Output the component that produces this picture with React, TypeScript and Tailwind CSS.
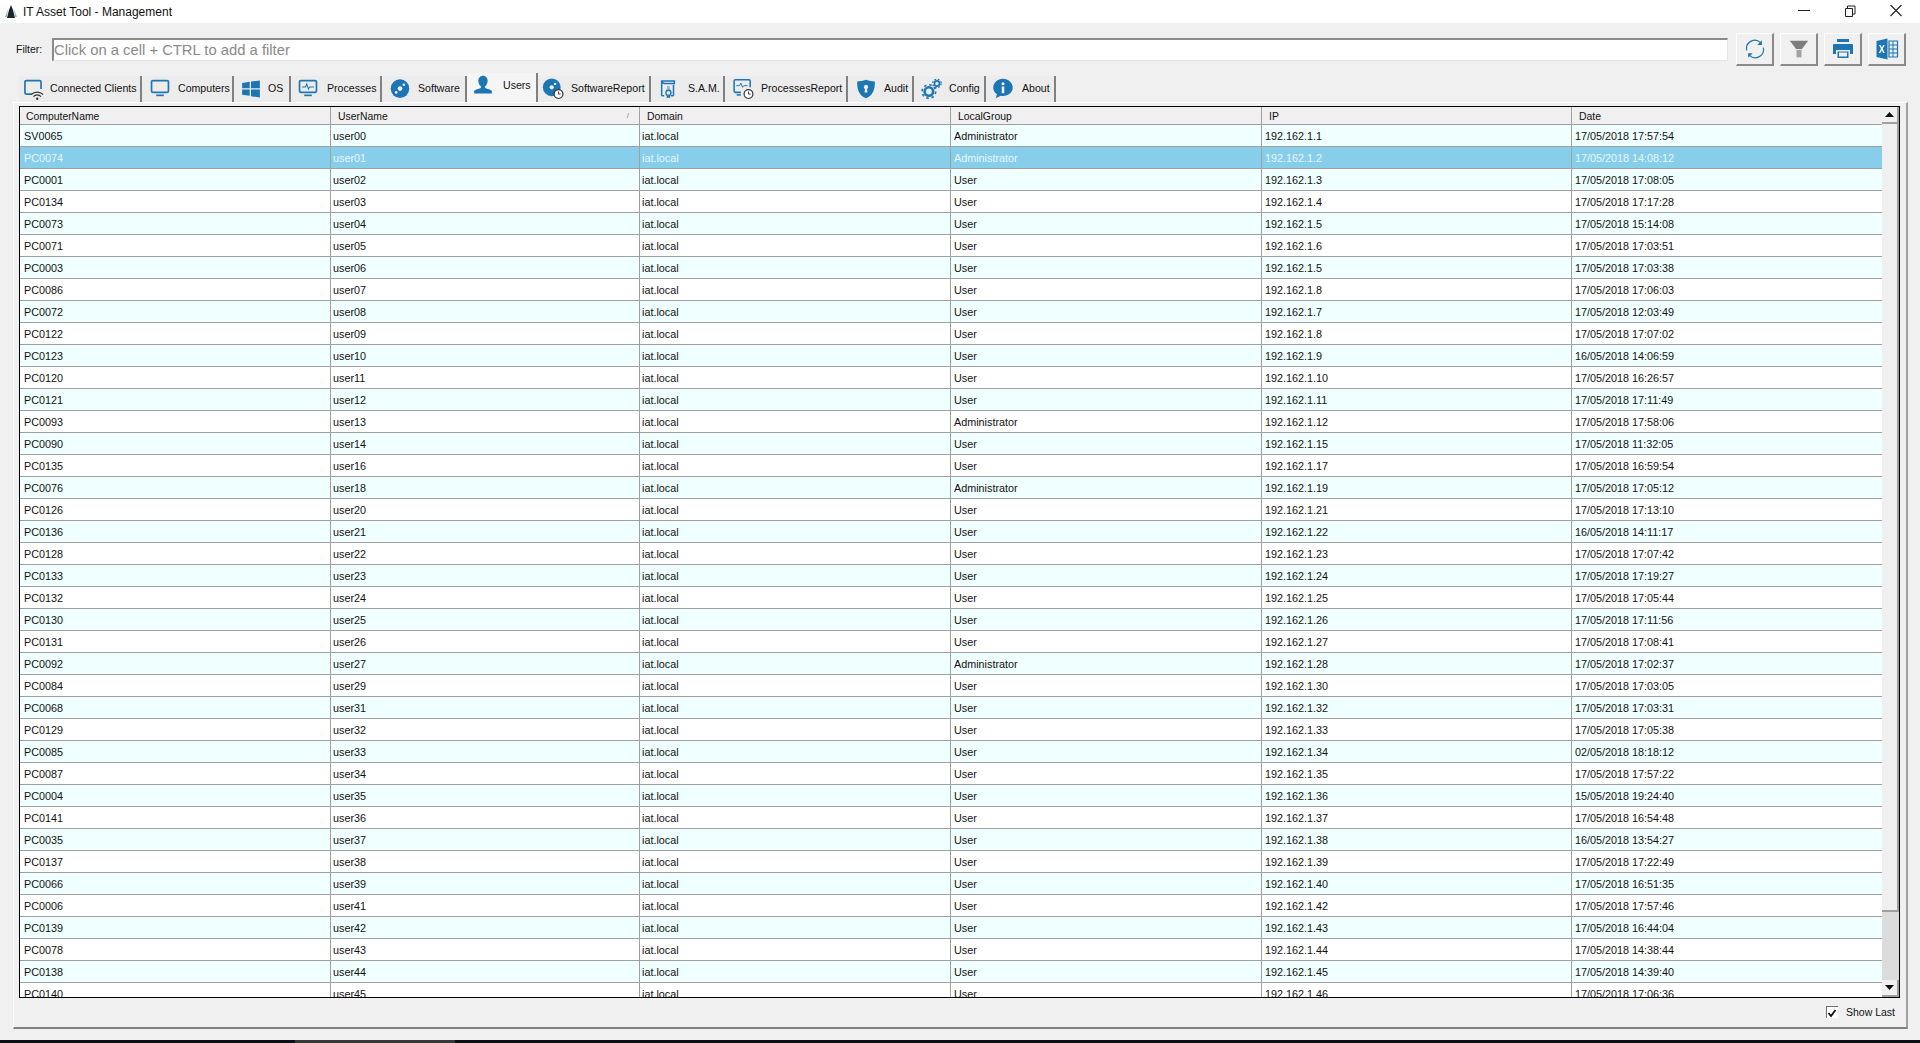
import type { ReactNode } from "react";

const BLUE = "#1d76b4";

// computer, user, group, ip suffix, date
const raw: [string, string, string, string, string][] = [
  ["SV0065", "user00", "Administrator", "1", "17/05/2018 17:57:54"],
  ["PC0074", "user01", "Administrator", "2", "17/05/2018 14:08:12"],
  ["PC0001", "user02", "User", "3", "17/05/2018 17:08:05"],
  ["PC0134", "user03", "User", "4", "17/05/2018 17:17:28"],
  ["PC0073", "user04", "User", "5", "17/05/2018 15:14:08"],
  ["PC0071", "user05", "User", "6", "17/05/2018 17:03:51"],
  ["PC0003", "user06", "User", "5", "17/05/2018 17:03:38"],
  ["PC0086", "user07", "User", "8", "17/05/2018 17:06:03"],
  ["PC0072", "user08", "User", "7", "17/05/2018 12:03:49"],
  ["PC0122", "user09", "User", "8", "17/05/2018 17:07:02"],
  ["PC0123", "user10", "User", "9", "16/05/2018 14:06:59"],
  ["PC0120", "user11", "User", "10", "17/05/2018 16:26:57"],
  ["PC0121", "user12", "User", "11", "17/05/2018 17:11:49"],
  ["PC0093", "user13", "Administrator", "12", "17/05/2018 17:58:06"],
  ["PC0090", "user14", "User", "15", "17/05/2018 11:32:05"],
  ["PC0135", "user16", "User", "17", "17/05/2018 16:59:54"],
  ["PC0076", "user18", "Administrator", "19", "17/05/2018 17:05:12"],
  ["PC0126", "user20", "User", "21", "17/05/2018 17:13:10"],
  ["PC0136", "user21", "User", "22", "16/05/2018 14:11:17"],
  ["PC0128", "user22", "User", "23", "17/05/2018 17:07:42"],
  ["PC0133", "user23", "User", "24", "17/05/2018 17:19:27"],
  ["PC0132", "user24", "User", "25", "17/05/2018 17:05:44"],
  ["PC0130", "user25", "User", "26", "17/05/2018 17:11:56"],
  ["PC0131", "user26", "User", "27", "17/05/2018 17:08:41"],
  ["PC0092", "user27", "Administrator", "28", "17/05/2018 17:02:37"],
  ["PC0084", "user29", "User", "30", "17/05/2018 17:03:05"],
  ["PC0068", "user31", "User", "32", "17/05/2018 17:03:31"],
  ["PC0129", "user32", "User", "33", "17/05/2018 17:05:38"],
  ["PC0085", "user33", "User", "34", "02/05/2018 18:18:12"],
  ["PC0087", "user34", "User", "35", "17/05/2018 17:57:22"],
  ["PC0004", "user35", "User", "36", "15/05/2018 19:24:40"],
  ["PC0141", "user36", "User", "37", "17/05/2018 16:54:48"],
  ["PC0035", "user37", "User", "38", "16/05/2018 13:54:27"],
  ["PC0137", "user38", "User", "39", "17/05/2018 17:22:49"],
  ["PC0066", "user39", "User", "40", "17/05/2018 16:51:35"],
  ["PC0006", "user41", "User", "42", "17/05/2018 17:57:46"],
  ["PC0139", "user42", "User", "43", "17/05/2018 16:44:04"],
  ["PC0078", "user43", "User", "44", "17/05/2018 14:38:44"],
  ["PC0138", "user44", "User", "45", "17/05/2018 14:39:40"],
  ["PC0140", "user45", "User", "46", "17/05/2018 17:06:36"],
];

const Clock = ({ x, y }: { x: number; y: number }) => (
  <g>
    <circle cx={x} cy={y} r="5.2" fill="#fff" stroke="#333" strokeWidth="1.4" />
    <path d={`M${x} ${y - 3}V${y}H${x + 2.5}`} fill="none" stroke="#333" strokeWidth="1.1" />
  </g>
);

const Monitor = () => (
  <>
    <rect x="2.5" y="3" width="20" height="14" rx="1.5" fill="none" stroke={BLUE} strokeWidth="2" />
    <path d="M8 20.5h9" stroke={BLUE} strokeWidth="2" />
  </>
);

const icons: Record<string, ReactNode> = {
  clients: (
    <>
      <path d="M11 19H4.5A1.5 1.5 0 0 1 3 17.5V4.5A1.5 1.5 0 0 1 4.5 3h16A1.5 1.5 0 0 1 22 4.5V13" fill="none" stroke={BLUE} strokeWidth="2" />
      <path d="M10.5 19.5a10 10 0 0 1 14 0M13 22a6 6 0 0 1 9 0" fill="none" stroke="#333" strokeWidth="1.3" />
      <circle cx="17.5" cy="24.5" r="1.4" fill="#333" />
    </>
  ),
  computers: <Monitor />,
  os: (
    <path d="M2 6l9-1.500V12H2zM12.500 4.200L23 3v9H12.500zM2 13.500h9V21l-9-1.300zM12.500 13.500H23V23l-10.500-1.500z" fill={BLUE} />
  ),
  processes: (
    <>
      <Monitor />
      <path d="M5.500 10.500h4l1.500-3.500 2 6 1.500-2.500h5" fill="none" stroke={BLUE} strokeWidth="1.2" />
    </>
  ),
  software: (
    <>
      <circle cx="12.5" cy="12.500" r="11" fill={BLUE} />
      <circle cx="12.5" cy="12.500" r="2.800" fill="#f0f0f0" />
      <circle cx="17" cy="8" r="1.500" fill="#f0f0f0" />
      <circle cx="8" cy="17" r="1.500" fill="#f0f0f0" />
    </>
  ),
  users: (
    <path d="M12.500 1c3.200 0 5.500 2.500 5.500 6 0 2.600-1.300 5-3 6.400v1.900c2.500 1 7.100 2 8 3.700v3H2v-3c.9-1.700 5.500-2.700 8-3.700v-1.900C8.300 12 7 9.600 7 7c0-3.500 2.300-6 5.500-6z" fill={BLUE} />
  ),
  softwareReport: (
    <>
      <circle cx="11" cy="11" r="10.500" fill={BLUE} />
      <circle cx="11" cy="11" r="2.500" fill="#f0f0f0" />
      <circle cx="15" cy="7" r="1.400" fill="#f0f0f0" />
      <Clock x={19} y={19} />
    </>
  ),
  sam: (
    <>
      <path d="M5 21V6M5 3.500h15v3H8L5 5zM19 8v13M16 21h3M5 21h3" fill="none" stroke={BLUE} strokeWidth="1.800" />
      <path d="M11.500 9.500h3l.8 5.500h-4.600z" fill="#8fbfe0" />
      <circle cx="13" cy="17.500" r="3" fill="none" stroke={BLUE} strokeWidth="1.600" />
      <path d="M11 20v4l2-1 2 1v-4" fill={BLUE} />
    </>
  ),
  processesReport: (
    <>
      <path d="M10 17H3.500A1.500 1.500 0 0 1 2 15.500V3.500A1.500 1.500 0 0 1 3.500 2h16A1.500 1.500 0 0 1 21 3.500V11" fill="none" stroke={BLUE} strokeWidth="1.800" />
      <path d="M4.500 9h4l1.500-3 2 5 1.500-2h4.500" fill="none" stroke={BLUE} strokeWidth="1.100" />
      <path d="M5 20h5" stroke={BLUE} strokeWidth="1.800" />
      <Clock x={19} y={19} />
    </>
  ),
  audit: (
    <path fillRule="evenodd" d="M2 4c3 0 7-.8 10.500-2C16 3.200 20 4 23 4c0 9-1.500 16-10.500 20C3.500 20 2 13 2 4zM12.500 8a2.600 2.600 0 0 0-1.200 4.900l-.5 4.100h3.400l-.5-4.100A2.600 2.600 0 0 0 12.500 8z" fill={BLUE} />
  ),
  config: (
    <>
      <circle cx="10" cy="16" r="5" fill="none" stroke={BLUE} strokeWidth="3" />
      <circle cx="10" cy="16" r="8" fill="none" stroke={BLUE} strokeWidth="2" strokeDasharray="3 3.300" />
      <circle cx="19.500" cy="6.500" r="3" fill="none" stroke={BLUE} strokeWidth="2" />
      <circle cx="19.500" cy="6.500" r="5" fill="none" stroke={BLUE} strokeWidth="1.600" strokeDasharray="2 2" />
    </>
  ),
  about: (
    <>
      <path d="M12.500 1C6 1 1 5.800 1 11.500c0 3.100 1.700 5.900 4.300 7.800L4 24l5.700-3c.9.200 1.800.200 2.800.200 6.500 0 11.500-4.300 11.500-9.700S19 1 12.500 1z" fill={BLUE} />
      <rect x="11" y="10" width="3" height="8" fill="#f0f0f0" />
      <circle cx="12.5" cy="6.800" r="1.800" fill="#f0f0f0" />
    </>
  ),
};

const tabs = [
  { id: "clients", label: "Connected Clients", w: 123, gap: "gap-[6px]", pl: "pl-[3px]" },
  { id: "computers", label: "Computers", w: 92, gap: "gap-[7px]", pl: "pl-[7px]" },
  { id: "os", label: "OS", w: 57, gap: "gap-[6px]", pl: "pl-[6px]" },
  { id: "processes", label: "Processes", w: 91, gap: "gap-[8px]", pl: "pl-[6px]" },
  { id: "software", label: "Software", w: 85, gap: "gap-[7px]", pl: "pl-[7px]" },
  { id: "users", label: "Users", w: 71, gap: "gap-[9px]", pl: "pl-[5px]" },
  { id: "softwareReport", label: "SoftwareReport", w: 113, gap: "gap-[7px]", pl: "pl-[4px]" },
  { id: "sam", label: "S.A.M.", w: 74, gap: "gap-[9px]", pl: "pl-[6px]" },
  { id: "processesReport", label: "ProcessesReport", w: 123, gap: "gap-[7px]", pl: "pl-[7px]" },
  { id: "audit", label: "Audit", w: 66, gap: "gap-[7px]", pl: "pl-[7px]" },
  { id: "config", label: "Config", w: 72, gap: "gap-[7px]", pl: "pl-[6px]" },
  { id: "about", label: "About", w: 70, gap: "gap-[8px]", pl: "pl-[6px]" },
];

const columns = ["ComputerName", "UserName", "Domain", "LocalGroup", "IP", "Date"];
const gridCols = "grid grid-cols-[311px_309px_311px_311px_310px_1fr]";

function ToolButton({ children }: { children: ReactNode }) {
  return (
    <button className="w-[38px] h-[33px] flex items-center justify-center bg-[#f0f0f0] border-t border-l border-t-white border-l-white border-r-2 border-b-2 border-r-[#8a8a8a] border-b-[#8a8a8a]">
      {children}
    </button>
  );
}

function ScrollArrow({ d }: { d: string }) {
  return (
    <div className="h-[17px] shrink-0 bg-[#f0f0f0] border-r-2 border-b-2 border-[#a0a0a0] flex items-center justify-center">
      <svg width="9" height="5" viewBox="0 0 9 5">
        <path d={d} fill="#111" />
      </svg>
    </div>
  );
}

function Row({ cells, index }: { cells: (typeof raw)[number]; index: number }) {
  const selected = index === 1;
  const bg = selected ? "bg-[#87ceeb] text-[#e8f6fb]" : index % 2 === 0 ? "bg-[#f0ffff] text-[#111]" : "bg-white text-[#111]";
  const values = [cells[0], cells[1], "iat.local", cells[2], `192.162.1.${cells[3]}`, cells[4]];
  return (
    <div className={`${gridCols} h-[22px] shrink-0 border-b border-[#a0a0a0] ${bg}`}>
      {values.map((v, i) => (
        <div key={i} className={`pt-[1px] leading-[20px] whitespace-nowrap ${i < 5 ? "border-r border-[#a0a0a0]" : ""} ${i === 0 ? "pl-[4px]" : i < 3 ? "pl-[2px]" : "pl-[3px]"}`}>
          {v}
        </div>
      ))}
    </div>
  );
}

export default function App() {
  return (
    <div className="h-[1043px] w-[1920px] overflow-hidden flex flex-col bg-[#f0f0f0] text-[10.8px] text-[#111] font-['Liberation_Sans',Arial,sans-serif]">
      {/* title bar */}
      <div className="h-[23px] shrink-0 bg-white flex items-center">
        <svg width="14" height="16" viewBox="0 0 14 16" className="ml-[4px]">
          <path d="M7 1L5 6l-2 8h8L9 6z" fill="#222" />
          <path d="M4 5L1 13h2zM10 5l3 8h-2z" fill="#7cc0e0" />
        </svg>
        <span className="ml-[5px] text-[12px]">IT Asset Tool - Management</span>
        <div className="ml-auto flex items-center h-full mr-[1px]">
          <svg width="46" height="23" viewBox="0 0 46 23"><path d="M17 10.500h12" stroke="#222" /></svg>
          <svg width="46" height="23" viewBox="0 0 46 23">
            <path d="M18.500 8.500h7v8h-7zM20.500 8.500v-2.500h7.500v8h-2.500" fill="none" stroke="#222" />
          </svg>
          <svg width="46" height="23" viewBox="0 0 46 23">
            <path d="M17.500 5l11 11M28.500 5l-11 11" stroke="#222" strokeWidth="1.100" />
          </svg>
        </div>
      </div>

      {/* filter bar */}
      <div className="h-[52px] shrink-0 flex items-center pl-[16px]">
        <span className="text-[10.500px] w-[36px] mt-[2px]">Filter:</span>
        <div className="w-[1676px] h-[23px] bg-white border-t-2 border-l-2 border-t-[#8a8a8a] border-l-[#8a8a8a] border-b border-r border-b-[#e4e4e4] border-r-[#e4e4e4] text-[14.800px] leading-[20px] text-[#8a8a8a]">
          Click on a cell + CTRL to add a filter
        </div>
        <div className="ml-[8px] flex gap-[6px]">
          <ToolButton>
            <svg width="22" height="22" viewBox="0 0 24 24" fill="none" stroke={BLUE} strokeWidth="1.300">
              <path d="M3 13.500A9 9 0 0 1 18 5M21 10.500A9 9 0 0 1 6 19" />
              <path d="M19.500 2.500v5h-5M4.500 21.500v-5h5" fill={BLUE} stroke="none" />
            </svg>
          </ToolButton>
          <ToolButton>
            <svg width="20" height="20" viewBox="0 0 24 24">
              <path d="M1 2h22l-7.500 10h-7z" fill="#7d7d7d" />
              <path d="M9 13h6v9H9z" fill="#a2a2a2" />
            </svg>
          </ToolButton>
          <ToolButton>
            <svg width="24" height="24" viewBox="0 0 24 24" className="mt-[1px]">
              <path d="M6 2h12v3H6zM3 7h18a1 1 0 0 1 1 1v9h-3v-4H5v4H2V8a1 1 0 0 1 1-1zM6.500 14.500h11V21h-11z" fill={BLUE} />
              <path d="M8 15.500h8V19.500H8z" fill="#f0f0f0" />
            </svg>
          </ToolButton>
          <ToolButton>
            <svg width="24" height="24" viewBox="0 0 24 24" className="mt-[1px]">
              <path d="M1.500 4l11-2.500v21l-11-2.500z" fill={BLUE} />
              <path d="M4 8l1.500 0 1.300 2.400L8.200 8h1.500l-2 3.800 2.100 4.200H8.200L6.800 13.200 5.400 16H3.800l2.200-4.200z" fill="#fff" />
              <path d="M14 4h8.500v16H14z" fill="none" stroke={BLUE} strokeWidth="1.200" />
              <path d="M14 8h8M14 12h8M14 16h8M18 4v16" stroke={BLUE} />
            </svg>
          </ToolButton>
        </div>
      </div>

      {/* tabs */}
      <div className="h-[27px] shrink-0 flex items-center pl-[19px]">
        {tabs.map((t) => (
          <div
            key={t.id}
            style={{ width: t.w }}
            className={`flex items-center ${t.gap} ${t.pl} border-r-2 border-[#808080] ${t.id === "users" ? "h-[30px] -mt-[2px] pb-[4px] bg-[#f5f5f5]" : "h-[26px] bg-[#ececec]"}`}
          >
            <svg width="22" height="22" viewBox="0 0 25 26" className="shrink-0">{icons[t.id]}</svg>
            <span className="whitespace-nowrap text-[10.600px]">{t.label}</span>
          </div>
        ))}
      </div>

      {/* main panel */}
      <div className="flex-1 min-h-0 flex flex-col ml-[13px] mr-[12px] border-l border-l-white border-r-2 border-r-[#a0a0a0] border-b-2 border-b-[#808080] border-t border-t-white">
        <div className="mt-[3px] ml-[5px] mr-[6px] flex border border-black h-[892px] shrink-0">
          <div className="flex-1 min-w-0 flex flex-col overflow-hidden">
            <div className={`${gridCols} h-[18px] shrink-0 bg-[#f0f0f0] border-b border-[#a0a0a0]`}>
              {columns.map((c, i) => (
                <div key={c} className={`relative pt-[2px] leading-[15px] text-[10.400px] ${i === 0 ? "pl-[6px]" : "pl-[7px]"} ${i < 5 ? "border-r border-[#a0a0a0]" : ""}`}>
                  {c}
                  {i === 1 && <span className="absolute right-[10px] top-[1px] text-[8px] text-[#888]">/</span>}
                </div>
              ))}
            </div>
            {raw.map((r, i) => (
              <Row key={r[0]} cells={r} index={i} />
            ))}
          </div>
          {/* scrollbar */}
          <div className="w-[17px] shrink-0 flex flex-col bg-[#f4f4f4] bg-[radial-gradient(#dcdcdc_1px,transparent_1px)] bg-[length:2px_2px]">
            <ScrollArrow d="M4.500 0L9 5H0z" />
            <div className="h-[788px] shrink-0 bg-[#f0f0f0] border-r-2 border-b-2 border-[#a0a0a0]"></div>
            <div className="flex-1"></div>
            <ScrollArrow d="M0 0h9L4.500 5z" />
          </div>
        </div>
        <div className="flex-1 flex items-center justify-end pr-[11px]">
          <div className="w-[12px] h-[12px] mr-[8px] -mt-[1px] bg-white border-t border-l border-[#707070] flex items-center justify-center">
            <svg width="10" height="10" viewBox="0 0 10 10"><path d="M1.500 5l2.500 3 4.500-6" fill="none" stroke="#111" strokeWidth="1.800" /></svg>
          </div>
          <span className="text-[10.500px]">Show Last</span>
        </div>
      </div>

      <div className="h-[11px] shrink-0"></div>
      <div className="h-[3px] shrink-0 bg-[#0b0f14] flex pl-[295px]">
        <div className="w-[160px] bg-[#383838]"></div>
      </div>
    </div>
  );
}
